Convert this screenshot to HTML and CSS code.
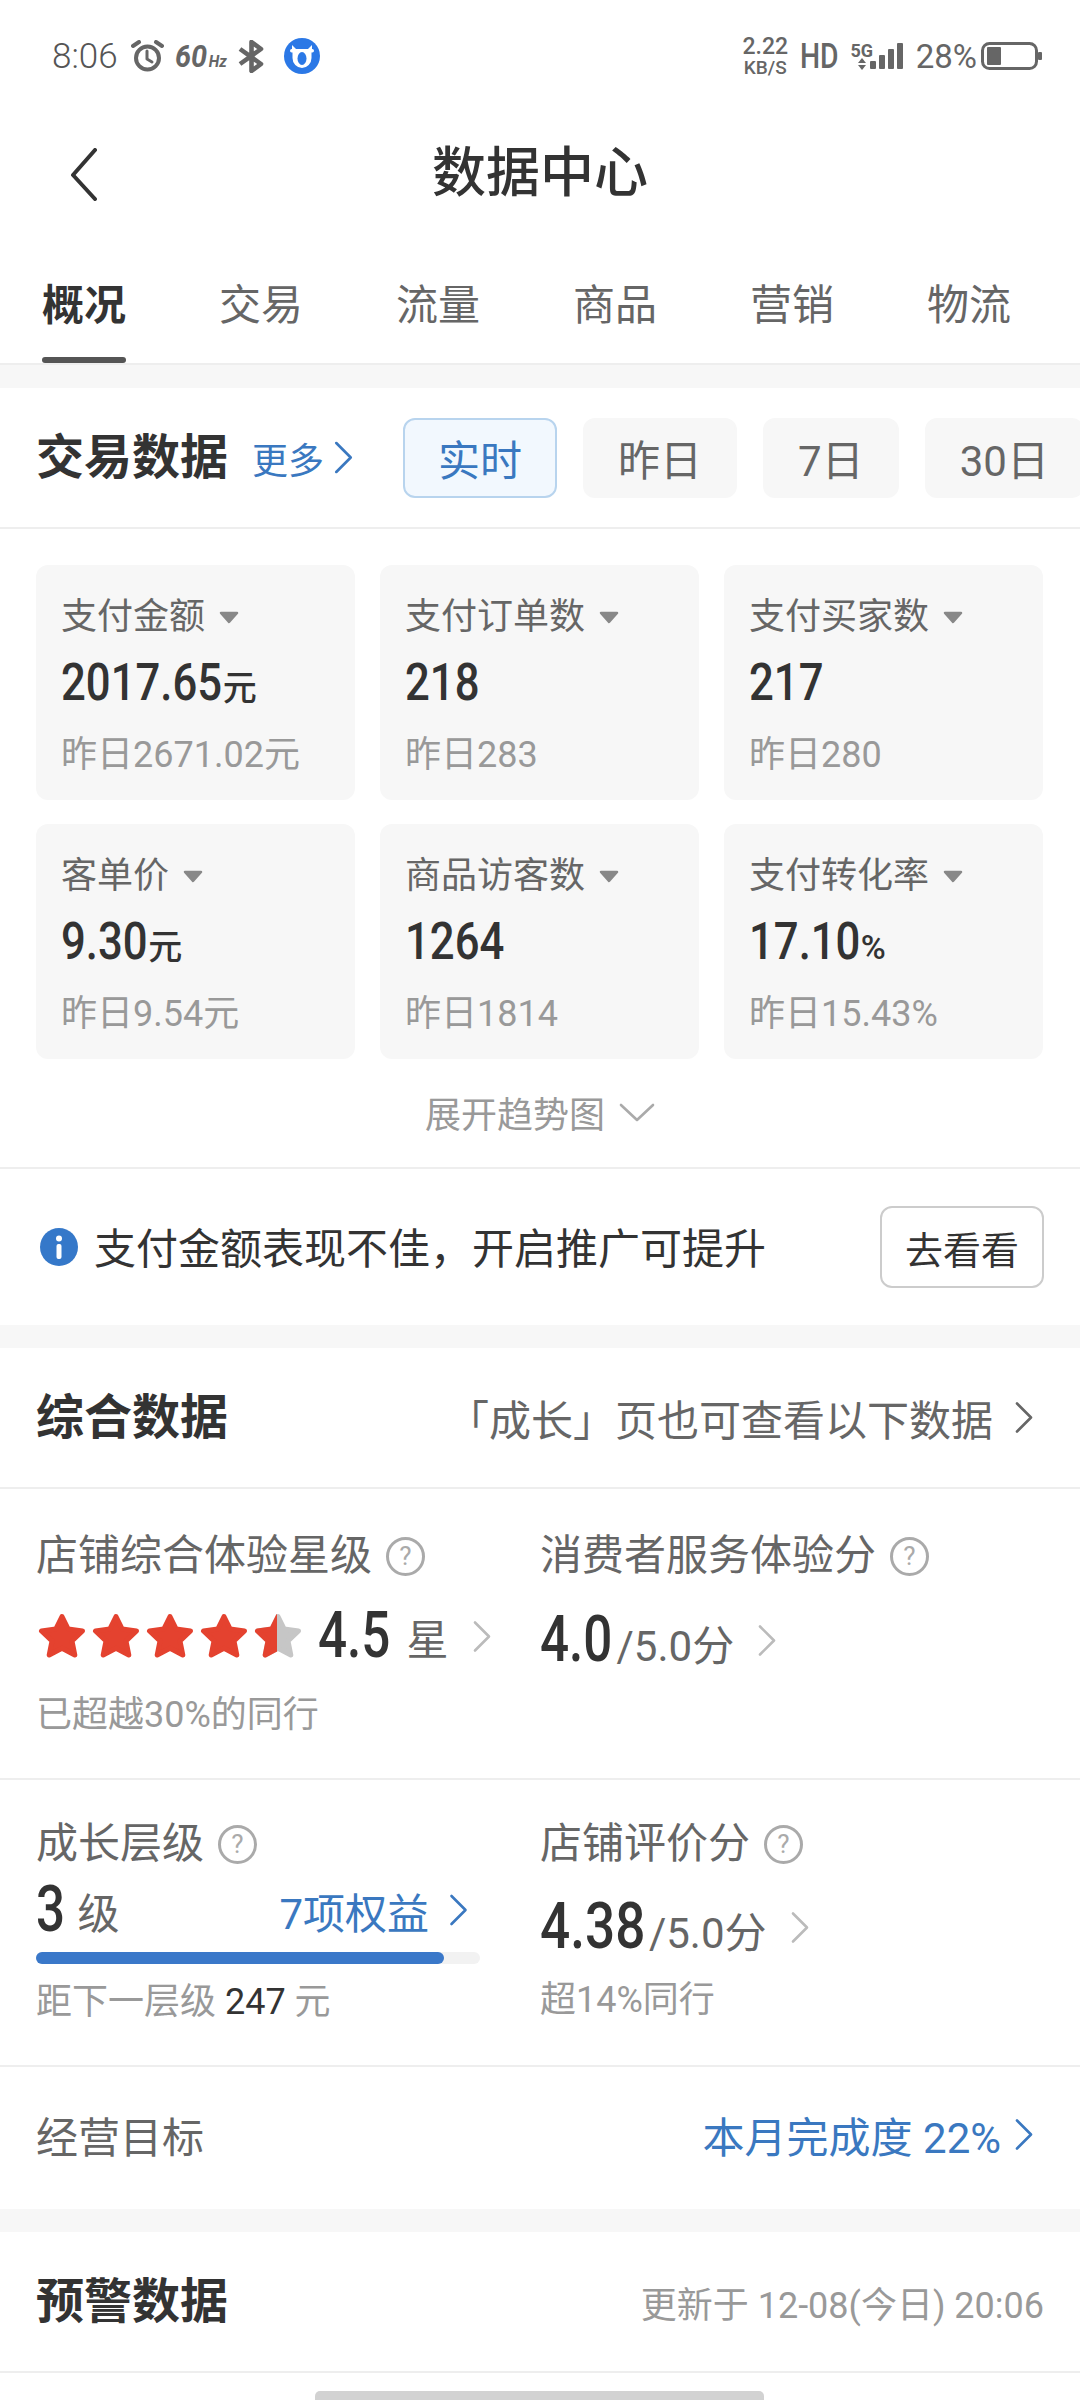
FILE: index.html
```html
<!DOCTYPE html>
<html lang="zh-CN">

<head>
    <meta charset="UTF-8">
    <meta name="viewport" content="width=device-width, initial-scale=1.0">
    <title>数据中心</title>
    <link rel="stylesheet" href="styles.css">
</head>

<body>
    <svg class="icon-defs" width="0" height="0">
        <defs>
            <symbol id="chevron" viewBox="0 0 18 32">
                <polyline points="2,2 16,16 2,30" fill="none" stroke="currentColor" stroke-width="2.6" stroke-linecap="round" stroke-linejoin="round" />
            </symbol>
            <symbol id="star" viewBox="0 0 48 46">
                <polygon points="24,3.5 30.2,16 44.5,18 34,28 36.8,42 24,35.2 11.2,42 14,28 3.5,18 17.8,16" fill="currentColor" stroke="currentColor" stroke-width="5" stroke-linejoin="round" />
            </symbol>
            <symbol id="caret" viewBox="0 0 20 13">
                <polygon points="2,2 18,2 10,11" fill="currentColor" stroke="currentColor" stroke-width="2.5" stroke-linejoin="round" />
            </symbol>
            <clipPath id="half-star">
                <rect x="0" y="0" width="23" height="46" />
            </clipPath>
        </defs>
    </svg>

    <div class="page">
        <div class="status-bar">
            <div class="status-left">
                <span class="clock">8:06</span>
                <svg class="alarm" viewBox="0 0 33 32" width="33" height="32">
                    <circle cx="16.5" cy="18" r="11.5" fill="none" stroke="#666" stroke-width="4" />
                    <polyline points="16,11 16,19 21,22" fill="none" stroke="#666" stroke-width="3" stroke-linecap="round" stroke-linejoin="round" />
                    <line x1="2" y1="6" x2="8" y2="2" stroke="#666" stroke-width="4" stroke-linecap="round" />
                    <line x1="31" y1="6" x2="25" y2="2" stroke="#666" stroke-width="4" stroke-linecap="round" />
                </svg>
                <span class="refresh">60<small>Hz</small></span>
                <svg viewBox="0 0 27 33" width="27" height="33">
                    <polyline points="2,9 23,24 13.5,31 13.5,2 23,9 2,24" fill="none" stroke="#666" stroke-width="4.6" stroke-linejoin="round" />
                </svg>
                <svg class="app-icon" viewBox="0 0 36 36" width="36" height="36">
                    <circle cx="18" cy="18" r="18" fill="#2b78e6" />
                    <polygon points="8,7 12,11 8,12" fill="#fff" />
                    <polygon points="28,7 24,11 28,12" fill="#fff" />
                    <rect x="6" y="11" width="24" height="3.5" rx="1.7" fill="#fff" />
                    <path d="M8.5 11 H27.5 V20 A9.5 10 0 0 1 8.5 20 Z" fill="#fff" />
                    <ellipse cx="18" cy="20.5" rx="4.5" ry="6.5" fill="#2b78e6" />
                </svg>
            </div>
            <div class="status-right">
                <div class="speed"><span>2.22</span><span class="speed-unit">KB/S</span></div>
                <span class="hd">HD</span>
                <div class="network">
                    <span>5G</span>
                    <svg viewBox="0 0 8 12" width="8" height="12">
                        <polygon points="4,0 8,5 0,5" fill="#666" />
                        <polygon points="4,12 8,7 0,7" fill="#666" />
                    </svg>
                </div>
                <svg class="signal" viewBox="0 0 33 26" width="33" height="26">
                    <rect x="0" y="18" width="6" height="8" rx="1" fill="#666" />
                    <rect x="9" y="12" width="6" height="14" rx="1" fill="#666" />
                    <rect x="18" y="6" width="6" height="20" rx="1" fill="#666" />
                    <rect x="27" y="0" width="6" height="26" rx="1" fill="#666" />
                </svg>
                <span class="battery-text">28%</span>
                <svg viewBox="0 0 61 28" width="61" height="28">
                    <rect x="1.5" y="1.5" width="54" height="25" rx="7" fill="none" stroke="#666" stroke-width="3" />
                    <rect x="6" y="5" width="14" height="18" rx="1" fill="#666" />
                    <rect x="57" y="10" width="4" height="8" rx="1" fill="#666" />
                </svg>
            </div>
        </div>

        <div class="nav-bar">
            <div class="nav-back">
                <svg viewBox="0 0 27 53" width="27" height="53">
                    <polyline points="25,2 3,27 25,51" fill="none" stroke="#333" stroke-width="4" stroke-linecap="round" stroke-linejoin="round" />
                </svg>
            </div>
            <h1 class="nav-title">数据中心</h1>
        </div>

        <div class="tabs">
            <div class="tab active"><span>概况</span><i class="tab-line"></i></div>
            <div class="tab"><span>交易</span></div>
            <div class="tab"><span>流量</span></div>
            <div class="tab"><span>商品</span></div>
            <div class="tab"><span>营销</span></div>
            <div class="tab"><span>物流</span></div>
        </div>

        <div class="band"></div>

        <div class="section-head trade-head">
            <h2>交易数据</h2>
            <span class="more">更多<svg width="19" height="33"><use href="#chevron" /></svg></span>
            <div class="chips">
                <span class="chip current">实时</span>
                <span class="chip">昨日</span>
                <span class="chip">7日</span>
                <span class="chip">30日</span>
            </div>
        </div>

        <div class="cards">
            <div class="card">
                <div class="card-label">支付金额<svg width="20" height="13"><use href="#caret" /></svg></div>
                <div class="card-value"><span class="digits len-7">2017.65</span><span class="unit">元</span></div>
                <div class="card-sub">昨日2671.02元</div>
            </div>
            <div class="card">
                <div class="card-label">支付订单数<svg width="20" height="13"><use href="#caret" /></svg></div>
                <div class="card-value"><span class="digits">218</span></div>
                <div class="card-sub">昨日283</div>
            </div>
            <div class="card">
                <div class="card-label">支付买家数<svg width="20" height="13"><use href="#caret" /></svg></div>
                <div class="card-value"><span class="digits">217</span></div>
                <div class="card-sub">昨日280</div>
            </div>
            <div class="card">
                <div class="card-label">客单价<svg width="20" height="13"><use href="#caret" /></svg></div>
                <div class="card-value"><span class="digits len-4">9.30</span><span class="unit">元</span></div>
                <div class="card-sub">昨日9.54元</div>
            </div>
            <div class="card">
                <div class="card-label">商品访客数<svg width="20" height="13"><use href="#caret" /></svg></div>
                <div class="card-value"><span class="digits">1264</span></div>
                <div class="card-sub">昨日1814</div>
            </div>
            <div class="card">
                <div class="card-label">支付转化率<svg width="20" height="13"><use href="#caret" /></svg></div>
                <div class="card-value"><span class="digits len-5">17.10</span><span class="unit percent">%</span></div>
                <div class="card-sub">昨日15.43%</div>
            </div>
        </div>

        <div class="expand">展开趋势图
            <svg viewBox="0 0 36 19" width="36" height="19">
                <polyline points="2,2 18,17 34,2" fill="none" stroke="#aaa" stroke-width="2.6" stroke-linecap="round" stroke-linejoin="round" />
            </svg>
        </div>

        <div class="notice">
            <svg viewBox="0 0 38 38" width="38" height="38">
                <circle cx="19" cy="19" r="19" fill="#3578c9" />
                <circle cx="19" cy="10.5" r="3" fill="#fff" />
                <rect x="16.5" y="16" width="5" height="15" rx="2" fill="#fff" />
            </svg>
            <span class="notice-text">支付金额表现不佳&#xFF0C;开启推广可提升</span>
            <span class="notice-btn">去看看</span>
        </div>

        <div class="band"></div>

        <div class="section-head">
            <h2>综合数据</h2>
            <span class="head-link">「成长」页也可查看以下数据<svg width="18" height="33"><use href="#chevron" /></svg></span>
        </div>

        <div class="metrics first">
            <div class="metric">
                <div class="metric-title">店铺综合体验星级<span class="help">?</span></div>
                <div class="metric-value stars-row">
                    <div class="stars">
                        <svg width="48" height="46"><use href="#star" /></svg>
                        <svg width="48" height="46"><use href="#star" /></svg>
                        <svg width="48" height="46"><use href="#star" /></svg>
                        <svg width="48" height="46"><use href="#star" /></svg>
                        <svg class="star-half" width="48" height="46">
                            <use href="#star" class="star-empty" />
                            <g clip-path="url(#half-star)"><use href="#star" /></g>
                        </svg>
                    </div>
                    <span class="big-num">4.5</span>
                    <span class="num-unit">星</span>
                    <svg class="go" width="18" height="33"><use href="#chevron" /></svg>
                </div>
                <div class="metric-sub">已超越30%的同行</div>
            </div>
            <div class="metric">
                <div class="metric-title">消费者服务体验分<span class="help">?</span></div>
                <div class="metric-value score-row">
                    <span class="big-num">4.0</span><span class="score-total">/5.0分</span>
                    <svg class="go" width="18" height="33"><use href="#chevron" /></svg>
                </div>
            </div>
        </div>

        <div class="metrics second">
            <div class="metric">
                <div class="metric-title">成长层级<span class="help">?</span></div>
                <div class="level-row">
                    <span class="big-num one">3</span>
                    <span class="level-unit">级</span>
                    <span class="level-link">7项权益<svg width="19" height="32"><use href="#chevron" /></svg></span>
                </div>
                <div class="track"><div class="track-fill" style="width: 92%"></div></div>
                <div class="metric-sub next-level">距下一层级 <b>247</b> 元</div>
            </div>
            <div class="metric">
                <div class="metric-title">店铺评价分<span class="help">?</span></div>
                <div class="metric-value rating-row">
                    <span class="big-num wide">4.38</span><span class="score-total">/5.0分</span>
                    <svg class="go" width="18" height="33"><use href="#chevron" /></svg>
                </div>
                <div class="metric-sub rating-sub">超14%同行</div>
            </div>
        </div>

        <div class="goal">
            <span class="goal-label">经营目标</span>
            <span class="goal-link">本月完成度 22%<svg width="18" height="33"><use href="#chevron" /></svg></span>
        </div>

        <div class="band"></div>

        <div class="section-head">
            <h2>预警数据</h2>
            <span class="updated">更新于 12-08(今日) 20:06</span>
        </div>

        <div class="scroll-thumb"></div>
    </div>
</body>

</html>
```

FILE: styles.css
```css
* {
    box-sizing: border-box;
}

body {
    margin: 0;
    background: #ffffff;
    color: #333;
    font-family: 'Roboto', 'Noto Sans CJK SC', sans-serif;
}

.icon-defs {
    display: block;
    height: 0;
}

.page {
    position: relative;
    width: 1080px;
    height: 2400px;
    overflow: hidden;
    background: #ffffff;
}

/* status bar */
.status-bar {
    display: flex;
    justify-content: space-between;
    align-items: center;
    height: 112px;
    padding: 0 38px 0 52px;
    color: #666;
}

.status-left,
.status-right {
    display: flex;
    align-items: center;
}

.clock {
    font-size: 35px;
    font-weight: 300;
    color: #555;
    margin-right: 13px;
}

.refresh {
    display: inline-block;
    margin: 0 6px 0 11px;
    font-size: 32px;
    font-style: italic;
    font-weight: 700;
    transform: scaleX(0.9);
    transform-origin: left;
}

.refresh small {
    font-size: 17px;
    margin-left: 2px;
}

.app-icon {
    margin-left: 19px;
}

.speed {
    display: flex;
    flex-direction: column;
    align-items: center;
    margin-right: 12px;
    font-size: 23px;
    font-weight: 500;
    line-height: 23px;
}

.speed-unit {
    font-size: 19px;
    line-height: 19px;
}

.hd {
    display: inline-block;
    margin-right: 3px;
    font-size: 35px;
    font-weight: 500;
    transform: scaleX(0.81);
    transform-origin: left;
}

.network {
    display: flex;
    flex-direction: column;
    align-items: center;
    width: 22px;
    font-size: 18px;
    font-weight: 700;
    line-height: 15px;
}

.signal {
    margin-left: -3px;
}

.battery-text {
    font-size: 33px;
    margin: 0 4px 0 13px;
}

/* nav */
.nav-bar {
    display: grid;
    grid-template-columns: 1fr auto 1fr;
    align-items: center;
    height: 122px;
}

.nav-back {
    display: flex;
    padding: 3px 0 0 70px;
}

.nav-title {
    margin: 0;
    padding-top: 2px;
    font-size: 54px;
    font-weight: 500;
    line-height: 60px;
}

/* tabs */
.tabs {
    display: flex;
    gap: 93px;
    height: 131px;
    padding: 51px 0 0 42px;
    border-bottom: 2px solid #eee;
    color: #666;
    font-size: 42px;
    line-height: 42px;
}

.tab {
    display: flex;
    flex-direction: column;
    width: 84px;
}

.tab.active {
    color: #333;
    font-weight: 700;
}

.tab-line {
    display: block;
    height: 6px;
    margin-top: 30px;
    background: #555;
    border-radius: 3px;
}

.band {
    height: 23px;
    background: #f7f7f7;
}

/* section heads */
.section-head {
    display: flex;
    justify-content: space-between;
    align-items: center;
    height: 141px;
    padding: 0 36px;
    border-bottom: 2px solid #eee;
}

.section-head h2 {
    flex-shrink: 0;
    margin: 0;
    font-size: 48px;
    font-weight: 700;
    line-height: 60px;
}

.trade-head {
    justify-content: flex-start;
    padding-right: 0;
}

.more {
    display: flex;
    flex-shrink: 0;
    align-items: center;
    margin-left: 24px;
    color: #3a78c0;
    font-size: 36px;
}

.more svg {
    margin-left: 10px;
}

.chips {
    display: flex;
    flex-shrink: 0;
    gap: 26px;
    margin-left: 50px;
}

.chip {
    display: flex;
    align-items: center;
    justify-content: center;
    height: 80px;
    padding: 0 33px;
    background: #f7f7f7;
    border: 2px solid #f7f7f7;
    border-radius: 12px;
    color: #666;
    font-size: 42px;
}

.chip.current {
    background: #f2f8fe;
    border-color: #b8d4ee;
    color: #3a78c0;
}

.head-link {
    display: flex;
    align-items: center;
    color: #666;
    font-size: 42px;
}

.head-link svg {
    margin: 0 11px 0 22px;
}

.updated {
    color: #999;
    font-size: 36px;
}

/* data cards */
.cards {
    display: grid;
    grid-template-columns: repeat(3, 319px);
    grid-auto-rows: 235px;
    gap: 24px 25px;
    padding: 36px 36px 0;
}

.card {
    padding: 32px 0 0 25px;
    background: #f7f7f7;
    border-radius: 12px;
}

.card-label {
    display: flex;
    align-items: center;
    color: #666;
    font-size: 36px;
    line-height: 40px;
}

.card-label svg {
    margin-left: 14px;
    color: #888;
}

.card-value {
    display: flex;
    align-items: baseline;
    height: 60px;
    margin-top: 16px;
    color: #333;
    font-size: 52px;
    font-weight: 500;
    line-height: 60px;
}

/* no condensed face is installed, so the figures are narrowed here */
.digits {
    display: inline-block;
    transform: scaleX(0.84);
    transform-origin: left;
}

.digits.len-7 {
    margin-right: -30px;
}

.digits.len-5 {
    margin-right: -21px;
}

.digits.len-4 {
    margin-right: -16px;
}

.unit {
    font-family: 'Noto Sans CJK SC', sans-serif;
    font-size: 34px;
}

.unit.percent {
    font-family: 'Roboto', sans-serif;
}

.card-sub {
    margin-top: 22px;
    color: #999;
    font-size: 36px;
    line-height: 40px;
}

.expand {
    display: flex;
    align-items: center;
    justify-content: center;
    gap: 14px;
    height: 110px;
    padding-bottom: 2px;
    border-bottom: 2px solid #eee;
    color: #999;
    font-size: 36px;
}

/* notice */
.notice {
    display: flex;
    align-items: center;
    height: 156px;
    padding: 0 36px 0 40px;
}

.notice-text {
    flex: 1;
    margin: 0 0 3px 16px;
    color: #333;
    font-size: 42px;
}

.notice-btn {
    display: flex;
    align-items: center;
    justify-content: center;
    width: 164px;
    height: 82px;
    border: 2px solid #ccc;
    border-radius: 12px;
    font-size: 38px;
}

/* metrics */
.metrics {
    display: grid;
    grid-template-columns: 504px 1fr;
    padding-left: 36px;
    border-bottom: 2px solid #eee;
}

.metrics.first {
    height: 291px;
    padding-top: 42px;
}

.metrics.second {
    height: 287px;
    padding-top: 39px;
}

.metric-title {
    display: flex;
    align-items: center;
    color: #666;
    font-size: 42px;
    line-height: 50px;
}

.help {
    display: flex;
    align-items: center;
    justify-content: center;
    width: 39px;
    height: 39px;
    margin-left: 14px;
    border: 3px solid #aaa;
    border-radius: 50%;
    color: #aaa;
    font-size: 26px;
    line-height: 1;
}

.metric-value {
    display: flex;
    align-items: baseline;
    height: 60px;
}

.stars-row {
    align-items: center;
    margin-top: 25px;
}

.score-row {
    margin-top: 29px;
}

.rating-row {
    margin-top: 28px;
}

.stars {
    display: flex;
    gap: 6px;
    margin-left: 2px;
    color: #e4422f;
}

.stars svg {
    display: block;
}

.star-empty {
    color: #c6c6c6;
}

.big-num {
    display: inline-block;
    margin-right: -18px;
    color: #333;
    font-size: 64px;
    font-weight: 500;
    line-height: 60px;
    transform: scaleX(0.8);
    transform-origin: left;
}

.big-num.one {
    margin-right: -7px;
}

.big-num.wide {
    margin-right: -22px;
    transform: scaleX(0.83);
}

.stars-row .big-num {
    margin-left: 16px;
}

.num-unit {
    margin-left: 16px;
    color: #666;
    font-size: 42px;
}

.score-total {
    margin-left: 4px;
    color: #666;
    font-size: 42px;
}

.go {
    align-self: center;
    margin-left: 24px;
    color: #bbb;
}

.metric-sub {
    color: #999;
    font-size: 36px;
    line-height: 40px;
}

.first .metric-sub {
    margin-top: 29px;
}

.level-row {
    display: flex;
    align-items: center;
    width: 444px;
    height: 50px;
    margin-top: 16px;
}

.level-unit {
    margin-left: 12px;
    color: #666;
    font-size: 42px;
}

.level-link {
    display: flex;
    align-items: center;
    margin-left: auto;
    padding-right: 12px;
    color: #3a78c0;
    font-size: 42px;
}

.level-link svg {
    margin-left: 20px;
}

.track {
    width: 444px;
    height: 12px;
    margin-top: 17px;
    background: #f2f2f2;
    border-radius: 6px;
}

.track-fill {
    height: 100%;
    background: #3a78c9;
    border-radius: 6px;
}

.next-level {
    margin-top: 18px;
}

.next-level b {
    color: #333;
    font-weight: 400;
}

.rating-sub {
    margin-top: 23px;
}

/* goal */
.goal {
    display: flex;
    justify-content: space-between;
    align-items: center;
    height: 142px;
    padding: 0 36px 8px;
}

.goal-label {
    color: #666;
    font-size: 42px;
}

.goal-link {
    display: flex;
    align-items: center;
    color: #3a78c0;
    font-size: 42px;
}

.goal-link svg {
    margin: 0 11px 0 14px;
}

.scroll-thumb {
    position: absolute;
    left: 315px;
    bottom: 0;
    width: 449px;
    height: 9px;
    background: #d2d2d2;
    border-radius: 5px 5px 0 0;
}
```
